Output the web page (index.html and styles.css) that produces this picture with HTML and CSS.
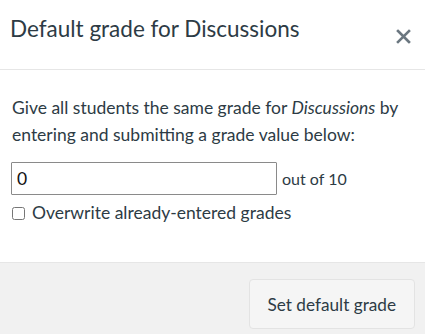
FILE: index.html
```html
<!DOCTYPE html>
<html lang="en">
<head>
    <meta charset="UTF-8">
    <meta name="viewport" content="width=device-width, initial-scale=1.0">
    <title>Default grade</title>
    <link rel="stylesheet" href="styles.css">
</head>
<body>
    <div class="dialog">
        <div class="dialog-header">
            <h2 class="dialog-title">Default grade for Discussions</h2>
            <button class="close-btn" aria-label="Close">
                <svg width="15" height="15" viewBox="0 0 15 15">
                    <path d="M2 2 L13 13 M13 2 L2 13" stroke="#6b7780" stroke-width="2.6" stroke-linecap="square"/>
                </svg>
            </button>
        </div>
        <div class="dialog-body">
            <p class="intro">Give all students the same grade for <em>Discussions</em> by entering and submitting a grade value below:</p>
            <div class="grade-row">
                <input class="grade-input" type="text" value="0">
                <span class="out-of">out of 10</span>
            </div>
            <label class="overwrite">
                <input type="checkbox">
                <span>Overwrite already-entered grades</span>
            </label>
        </div>
        <div class="dialog-footer">
            <button class="submit-btn">Set default grade</button>
        </div>
    </div>
</body>
</html>
```

FILE: styles.css
```css
body {
    margin: 0;
    background: #fff;
    font-family: Lato, "Open Sans", sans-serif;
    color: #2d3b45;
}

.dialog {
    width: 425px;
}

/* Header */
.dialog-header {
    height: 70px;
    box-sizing: border-box;
    border-bottom: 1px solid #e6e6e6;
    display: flex;
    justify-content: space-between;
    align-items: flex-start;
    padding: 0 14px 0 10px;
}

.dialog-title {
    margin: 15px 0 0;
    font-size: 22.5px;
    font-weight: 400;
    line-height: 28px;
}

.close-btn {
    border: none;
    background: none;
    padding: 0;
    margin-top: 29px;
    width: 15px;
    height: 15px;
    display: flex;
}

/* Body */
.dialog-body {
    padding: 24px 12px 0;
    height: 192px;
    box-sizing: border-box;
}

.intro {
    margin: 0 0 14px;
    font-size: 17.5px;
    line-height: 27px;
}

.grade-row {
    display: flex;
    align-items: center;
    gap: 5px;
}

.grade-input {
    width: 266px;
    height: 33px;
    box-sizing: border-box;
    margin: 0 0 0 -1px;
    border: 1px solid #8a8a8a;
    border-radius: 1px;
    padding: 0 5px;
    font-family: inherit;
    font-size: 17.5px;
    color: #111;
}

.out-of {
    font-size: 16px;
}

.overwrite {
    display: flex;
    align-items: center;
    gap: 7px;
    margin-top: 7px;
    font-size: 17.5px;
    line-height: 22px;
}

.overwrite input {
    margin: 0;
    width: 13px;
    height: 13px;
}

/* Footer */
.dialog-footer {
    background: #f1f1f1;
    border-top: 1px solid #e6e6e6;
    display: flex;
    justify-content: flex-end;
    padding: 16px 10px 20px;
}

.submit-btn {
    height: 50px;
    padding: 0 18px;
    background: #f5f5f5;
    border: 1px solid #e3e3e3;
    border-radius: 4px;
    font-family: inherit;
    font-size: 17.2px;
    color: #2d3b45;
}
```
